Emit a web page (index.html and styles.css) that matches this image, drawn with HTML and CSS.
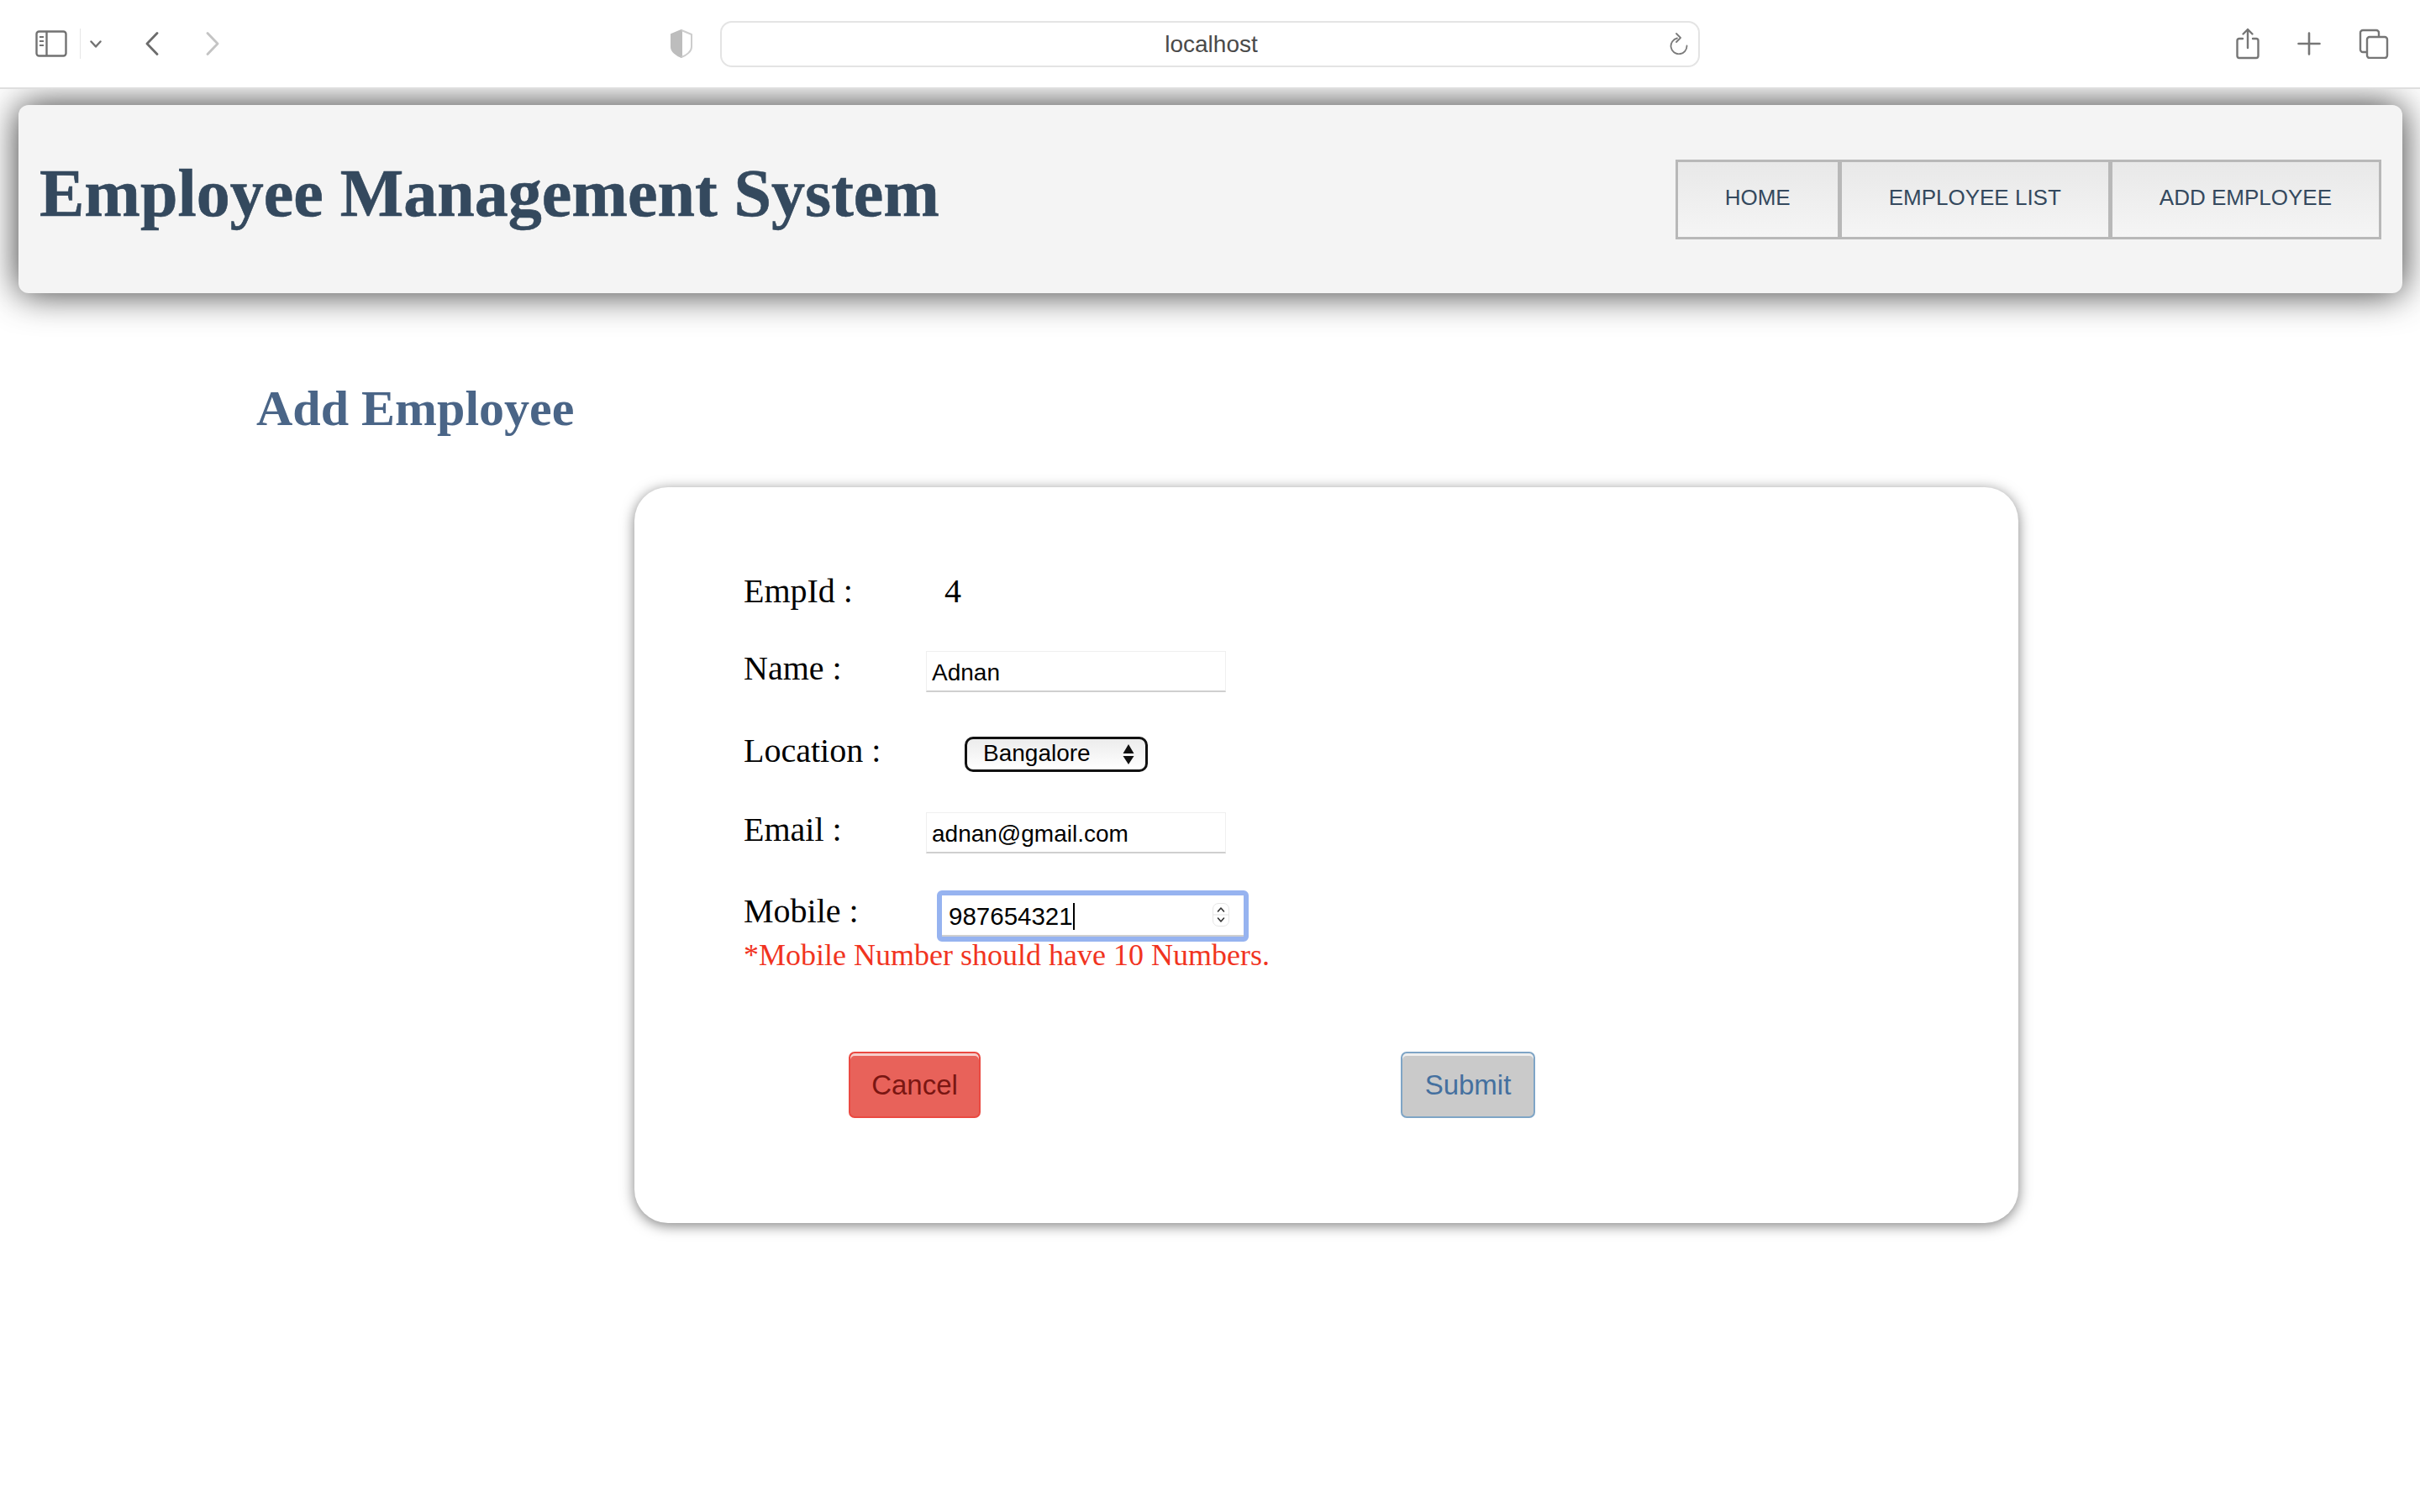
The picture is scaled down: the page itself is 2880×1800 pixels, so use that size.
FILE: index.html
```html
<!DOCTYPE html>
<html>
    <head>
        <title>Employee Management System</title>
        <link rel="stylesheet" href="styles.css">
    </head>
    <body>
        <div class="toolbar">
            <div class="toolbar-left">
                <svg class="icon-sidebar" width="38" height="32" viewBox="0 0 38 32" fill="none" stroke="#727272" stroke-width="2.4">
                    <rect x="1.500" y="1.500" width="35" height="29" rx="3"/>
                    <path d="M13.500 1.500v29"/>
                    <path d="M5 8h5M5 13h5M5 18h5" stroke-width="2"/>
                </svg>
                <span class="toolbar-sep"></span>
                <svg class="icon-down" width="14" height="9" viewBox="0 0 14 9" fill="none" stroke="#727272" stroke-width="2.4" stroke-linecap="round" stroke-linejoin="round">
                    <path d="M1.500 1.500L7 7.500l5.500-6"/>
                </svg>
                <svg class="icon-back" width="16" height="28" viewBox="0 0 16 28" fill="none" stroke="#6c6c6c" stroke-width="2.8" stroke-linecap="round" stroke-linejoin="round">
                    <path d="M14 1.500L2 14l12 12.500"/>
                </svg>
                <svg class="icon-forward" width="16" height="28" viewBox="0 0 16 28" fill="none" stroke="#c4c4c4" stroke-width="2.8" stroke-linecap="round" stroke-linejoin="round">
                    <path d="M2 1.500L14 14 2 26.500"/>
                </svg>
                <svg class="icon-shield" width="28" height="34" viewBox="0 0 28 34">
                    <path d="M14 1L2 6v15c0 5 6 10 12 12z" fill="#bdbdbd" stroke="#bdbdbd" stroke-width="2" stroke-linejoin="round"/>
                    <path d="M14 1l12 5v15c0 5-6 10-12 12" fill="none" stroke="#cdcdcd" stroke-width="2" stroke-linejoin="round"/>
                </svg>
            </div>
            <div class="address-bar">
                <span class="address-text">localhost</span>
                <svg class="icon-reload" width="22" height="26" viewBox="0 0 22 26" fill="none" stroke="#7a7a7a" stroke-width="1.800" stroke-linecap="round" stroke-linejoin="round">
                    <path d="M9 6.500a9.500 9.500 0 1 0 11.500 9"/>
                    <path d="M8 1l5 5-5 5"/>
                </svg>
            </div>
            <div class="toolbar-right">
                <svg width="28" height="38" viewBox="0 0 28 38" fill="none" stroke="#767676" stroke-width="2.4" stroke-linecap="round" stroke-linejoin="round">
                    <path d="M8 13H4a2.500 2.500 0 0 0-2.500 2.500v18A2.500 2.500 0 0 0 4 36h20a2.500 2.500 0 0 0 2.500-2.500v-18A2.500 2.500 0 0 0 24 13h-4"/>
                    <path d="M14 24V2M8.500 7.500L14 2l5.500 5.500"/>
                </svg>
                <svg width="28" height="28" viewBox="0 0 28 28" fill="none" stroke="#767676" stroke-width="2.6" stroke-linecap="round">
                    <path d="M14 1.500v25M1.500 14h25"/>
                </svg>
                <svg width="36" height="36" viewBox="0 0 36 36" fill="none" stroke="#767676" stroke-width="2.4">
                    <path d="M9 28H5a3 3 0 0 1-3-3V5a3 3 0 0 1 3-3h16a3 3 0 0 1 3 3v4"/>
                    <rect x="10" y="10" width="24" height="25" rx="3"/>
                </svg>
            </div>
        </div>

        <header class="site-header">
            <h1>Employee Management System</h1>
            <nav class="nav-buttons">
                <a class="nav-link" href="#">HOME</a>
                <a class="nav-link" href="#">EMPLOYEE LIST</a>
                <a class="nav-link" href="#">ADD EMPLOYEE</a>
            </nav>
        </header>

        <h2 class="page-title">Add Employee</h2>

        <form class="card">
            <div class="form-row row-id">
                <label>EmpId :</label>
                <span class="emp-id">4</span>
            </div>
            <div class="form-row row-name">
                <label for="name">Name :</label>
                <input class="text-field" id="name" type="text" value="Adnan">
            </div>
            <div class="form-row row-location">
                <label for="location">Location :</label>
                <div class="select-wrap">
                    <select class="select-field" id="location">
                        <option>Bangalore</option>
                        <option>Chennai</option>
                        <option>Hyderabad</option>
                    </select>
                    <svg class="select-arrows" width="14" height="26" viewBox="0 0 14 26" fill="#111">
                        <path d="M7 1l6.500 11H.5zM7 25L.5 15h13z"/>
                    </svg>
                </div>
            </div>
            <div class="form-row row-email">
                <label for="email">Email :</label>
                <input class="text-field" id="email" type="text" value="adnan@gmail.com">
            </div>
            <div class="form-row row-mobile">
                <label for="mobile">Mobile :</label>
                <div class="mobile-wrap">
                    <input class="text-field mobile-field" id="mobile" type="text" value="987654321">
                    <span class="caret"></span>
                    <span class="spinner">
                        <svg width="18" height="26" viewBox="0 0 18 26" fill="none" stroke-linecap="round" stroke-linejoin="round">
                            <path d="M5.500 9L9 5l3.500 4M5.500 17L9 21l3.500-4" stroke="#333" stroke-width="1.600"/>
                            <path d="M0 13h18" stroke="#e2e2e2" stroke-width="1"/>
                        </svg>
                    </span>
                </div>
            </div>
            <p class="error-text">*Mobile Number should have 10 Numbers.</p>
            <div class="form-actions">
                <button class="btn btn-cancel" type="button">Cancel</button>
                <button class="btn btn-submit" type="button">Submit</button>
            </div>
        </form>
    </body>
</html>
```

FILE: styles.css
```css
body {
    margin: 0;
    background-color: #fff;
    font-family: "Liberation Serif", serif;
    min-height: 1800px;
}

.toolbar {
    position: relative;
    z-index: 2;
    display: grid;
    grid-template-columns: 857px 1166px 1fr;
    align-items: center;
    height: 104px;
    background-color: #fff;
    border-bottom: 2px solid #dedede;
    box-sizing: content-box;
}

.toolbar-left {
    display: flex;
    align-items: center;
    padding-left: 42px;
}

.toolbar-sep {
    width: 1px;
    height: 36px;
    margin-left: 15px;
    background-color: #e6e6e6;
}

.icon-down {
    margin-left: 11px;
}

.icon-back {
    margin-left: 52px;
}

.icon-forward {
    margin-left: 56px;
}

.icon-shield {
    margin-left: 536px;
}

.address-bar {
    display: flex;
    align-items: center;
    justify-content: center;
    position: relative;
    height: 55px;
    box-sizing: border-box;
    padding: 1px 0 0 3px;
    border: 2px solid #e4e4e4;
    border-radius: 14px;
}

.address-text {
    font-family: "Liberation Sans", sans-serif;
    font-size: 28px;
    color: #4a4a4a;
}

.icon-reload {
    position: absolute;
    right: 12px;
    top: 12px;
}

.toolbar-right {
    display: flex;
    align-items: center;
    padding-left: 638px;
    gap: 45px;
}

.site-header {
    display: flex;
    align-items: center;
    justify-content: space-between;
    height: 224px;
    box-sizing: border-box;
    margin: 19px 21px 0 22px;
    padding: 0 25px 0 25px;
    background-color: #f4f4f4;
    border-radius: 12px;
    box-shadow: 0 0 44px rgba(0, 0, 0, 0.8);
}

h1 {
    margin: 0 0 14px;
    font-size: 80px;
    font-weight: bold;
    color: #34495e;
    -webkit-text-stroke: 0.6px #34495e;
}

.nav-buttons {
    display: flex;
}

.nav-link {
    display: flex;
    align-items: center;
    justify-content: center;
    height: 95px;
    box-sizing: border-box;
    padding: 0 56px 3px;
    font-family: "Liberation Sans", sans-serif;
    font-size: 26px;
    color: #34495e;
    text-decoration: none;
    background-image: linear-gradient(to bottom, #e8e8e8, #f5f5f5);
    border: 3px solid #b8b8b8;
}

.nav-link + .nav-link {
    margin-left: -1px;
}

.page-title {
    margin: 103px 0 0 305px;
    font-size: 60px;
    font-weight: bold;
    color: #4a6587;
}

.card {
    width: 1647px;
    height: 876px;
    box-sizing: border-box;
    margin: 59px 0 0 755px;
    padding: 99px 0 0 130px;
    background-color: #fff;
    border-radius: 40px;
    box-shadow: 0 3px 16px rgba(0, 0, 0, 0.5);
}

.form-row {
    display: flex;
    align-items: flex-start;
    font-size: 40px;
    color: #000;
}

.form-row label {
    width: 217px;
    flex-shrink: 0;
    line-height: 50px;
}

.row-id {
    height: 92px;
}

.emp-id {
    margin-left: 22px;
    line-height: 50px;
}

.row-name {
    height: 98px;
}

.text-field {
    width: 357px;
    height: 49px;
    box-sizing: border-box;
    margin-top: 4px;
    padding: 3px 6px 0;
    font-family: "Liberation Sans", sans-serif;
    font-size: 28px;
    color: #000;
    background-color: #fff;
    border: 1px solid #efefef;
    border-bottom: 2px solid #cfcfcf;
    outline: none;
}

.row-location {
    height: 94px;
}

.select-wrap {
    position: relative;
    margin: 8px 0 0 46px;
}

.select-field {
    display: block;
    width: 218px;
    height: 42px;
    box-sizing: border-box;
    padding: 0 0 3px 19px;
    appearance: none;
    font-family: "Liberation Sans", sans-serif;
    font-size: 28px;
    color: #000;
    background-image: linear-gradient(to bottom, #ececec, #fff);
    border: 3px solid #111;
    border-radius: 10px;
}

.select-arrows {
    position: absolute;
    right: 16px;
    top: 8px;
}

.row-email {
    height: 97px;
}

.row-mobile {
    height: 54px;
}

.mobile-wrap {
    position: relative;
    margin: 0 0 0 13px;
}

.mobile-field {
    width: 371px;
    height: 61px;
    margin: 0;
    padding: 0 8px;
    font-size: 29.5px;
    border: 6px solid #96b3f0;
    border-radius: 6px;
    box-shadow: inset 0 -2px 0 #cfcfcf;
}

.caret {
    position: absolute;
    left: 162px;
    top: 15px;
    width: 2px;
    height: 32px;
    background-color: #000;
}

.spinner {
    position: absolute;
    left: 328px;
    top: 15px;
    display: flex;
    border: 1px solid #e6e6e6;
    border-radius: 7px;
}

.error-text {
    margin: 0;
    font-size: 36px;
    line-height: 46px;
    color: #f1341f;
}

.form-actions {
    display: flex;
    margin: 92px 0 0 125px;
}

.btn {
    height: 79px;
    box-sizing: border-box;
    padding: 0;
    font-family: "Liberation Sans", sans-serif;
    font-size: 33px;
    border-radius: 7px;
    cursor: pointer;
}

.btn-cancel {
    width: 157px;
    color: #7a1612;
    background-color: #e8625a;
    border: 2px solid #ea4a42;
    box-shadow: inset 0 3px 0 #f6cfcc;
}

.btn-submit {
    width: 160px;
    margin-left: 500px;
    color: #44709f;
    background-color: #cacaca;
    border: 2px solid #7fa5c6;
    box-shadow: inset 0 3px 0 #efefef;
}
```
